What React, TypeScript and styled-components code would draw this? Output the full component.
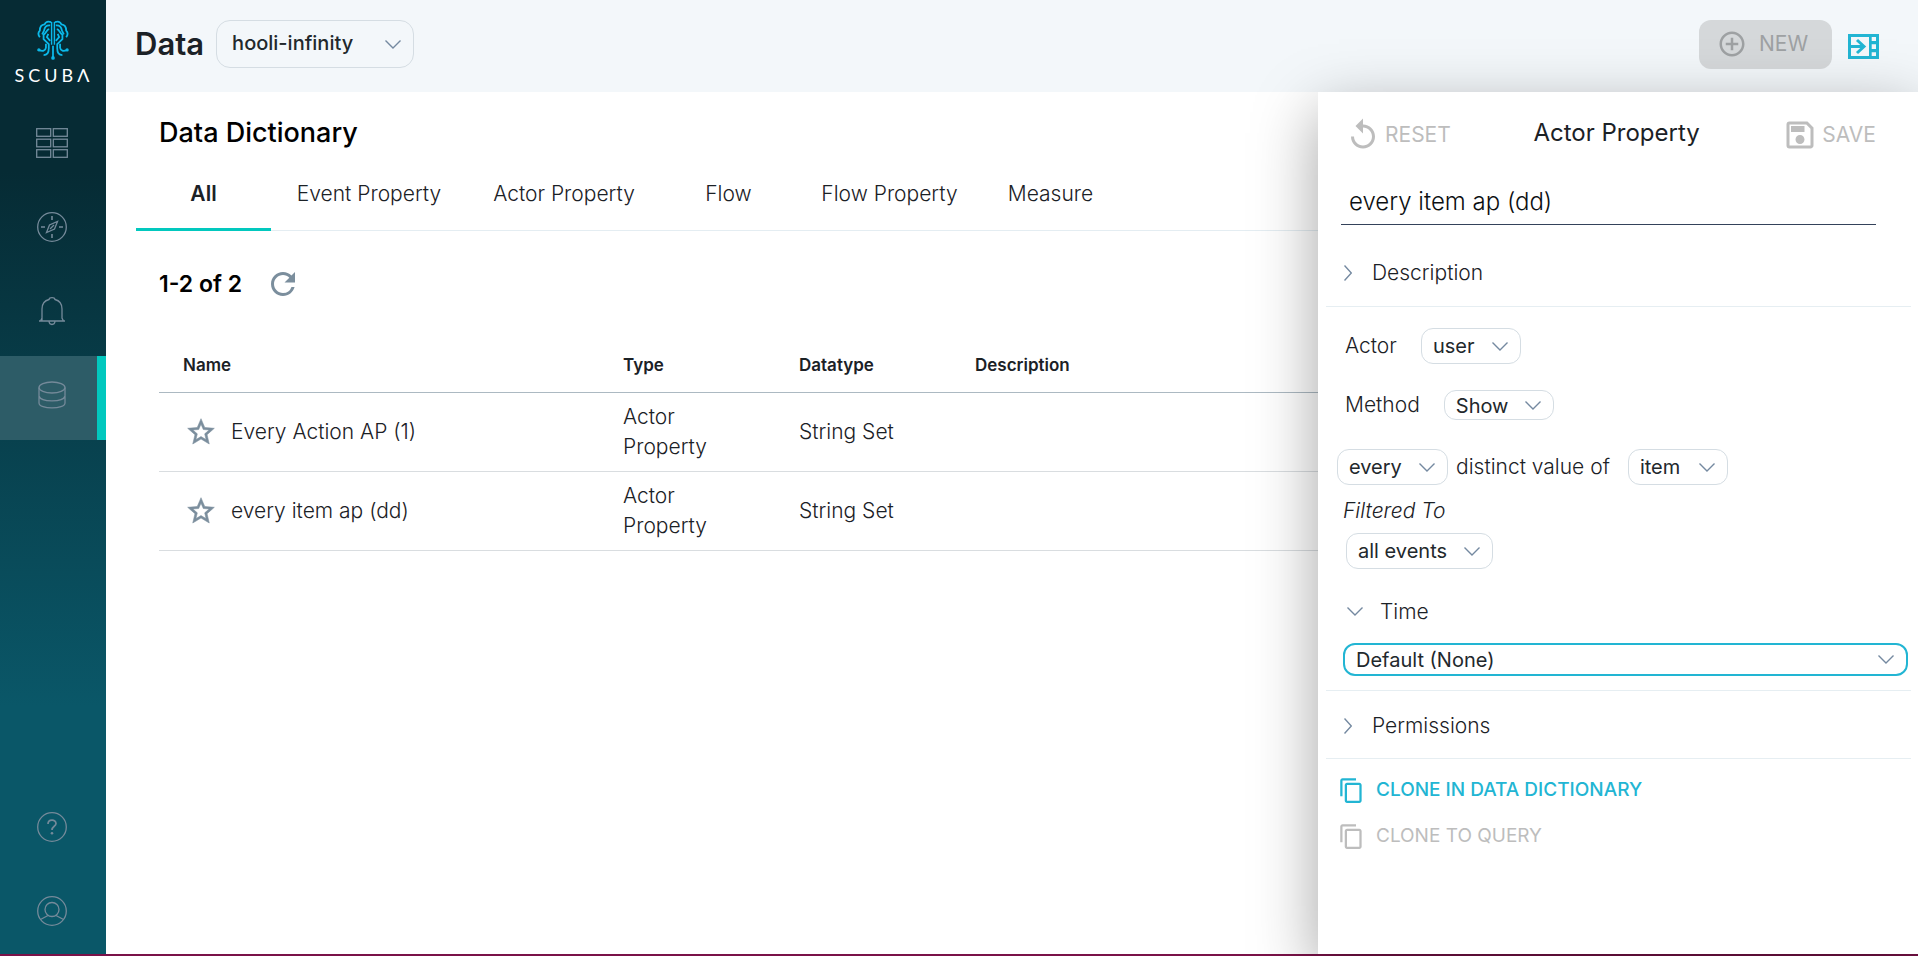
import React, { useState } from "react";
import styled, { createGlobalStyle, css } from "styled-components";
import {
  MdReplay,
  MdOutlineSave,
  MdContentCopy,
  MdRefresh,
  MdStarOutline,
  MdAddCircleOutline,
} from "react-icons/md";

const GlobalStyle = createGlobalStyle`
  *, *::before, *::after { box-sizing: border-box; }
  body {
    margin: 0;
    background: #ffffff;
    color: #1b2126;
    font-family: Inter, "Open Sans", sans-serif;
    font-size: 21px;
    font-weight: 300;
    line-height: 30px;
  }
  button, input, select { font: inherit; color: inherit; }
  h1, h2, p { margin: 0; }
`;

const Shell = styled.div`
  display: flex;
  min-height: 100vh;
  border-bottom: 2px solid #7a1248;
`;

const Sidebar = styled.nav`
  display: flex;
  flex-direction: column;
  flex: none;
  width: 106px;
  background: linear-gradient(180deg, #062b34 0%, #062b34 18%, #0a5768 74%, #0a5768 100%);
`;

const Brand = styled.a`
  display: flex;
  flex-direction: column;
  align-items: center;
  height: 104px;
  padding-top: 19px;
  padding-right: 1px;
  color: #ffffff;
  text-decoration: none;
`;

const Wordmark = styled.span`
  padding-left: 3px;
  font-family: Lato, sans-serif;
  font-size: 18px;
  font-weight: 400;
  line-height: 28px;
  letter-spacing: 4px;
`;

const NavSpacer = styled.div`
  flex: 1;
`;

const NavItem = styled.a<{ $active?: boolean; $footer?: boolean }>`
  display: flex;
  align-items: center;
  justify-content: center;
  height: 84px;
  padding: 0 2px ${(p) => (p.$footer ? 3 : 6)}px 0;
  color: #758a9a;
  ${(p) =>
    p.$active &&
    css`
      padding-right: 0;
      padding-left: 7px;
      border-right: 9px solid #02c8be;
      background: #2d5c67;
    `}
`;

const Main = styled.div`
  display: flex;
  flex-direction: column;
  flex: 1;
  min-width: 0;
`;

const TopBar = styled.header`
  display: flex;
  align-items: flex-start;
  height: 92px;
  padding: 20px 39px 0 29px;
  background: #f3f7fa;
`;

const PageTitle = styled.h1`
  margin-right: 12px;
  font-size: 31px;
  font-weight: 600;
  line-height: 48px;
`;

const SelectFrame = styled.span<{ $size?: "large" | "short" | "wide" }>`
  position: relative;
  display: inline-flex;
  align-items: center;
  height: 36px;
  border: 1px solid #d5dde3;
  border-radius: 12px;
  color: #22282c;
  ${(p) =>
    p.$size === "large" &&
    css`
      width: 198px;
      height: 48px;
      border-radius: 14px;
    `}
  ${(p) =>
    p.$size === "short" &&
    css`
      height: 30px;
    `}
  ${(p) =>
    p.$size === "wide" &&
    css`
      align-self: stretch;
      height: 33px;
      margin-left: 6px;
      border: 2px solid #22b5d3;
    `}
  svg {
    position: absolute;
    right: 12px;
    pointer-events: none;
  }
`;

const NativeSelect = styled.select<{ $roomy?: boolean }>`
  flex: 1;
  align-self: stretch;
  min-width: 0;
  appearance: none;
  padding: 0 0 ${(p) => (p.$roomy ? "2px 15px" : "0 11px")};
  border: 0;
  outline: 0;
  background: transparent;
  font-size: 20px;
  font-weight: ${(p) => (p.$roomy ? 500 : 400)};
`;

const TopActions = styled.div`
  display: flex;
  align-items: flex-start;
  gap: 16px;
  margin-left: auto;
`;

const NewButton = styled.button`
  display: flex;
  align-items: center;
  gap: 12px;
  width: 133px;
  height: 49px;
  padding: 0 0 1px 18px;
  border: 0;
  border-radius: 12px;
  background: #d5d8da;
  color: #9ea1a3;
  font-weight: 400;
`;

const CollapseButton = styled.button`
  display: flex;
  margin-top: 14px;
  padding: 0;
  border: 0;
  background: none;
  color: #22b5d3;
`;

const Body = styled.div`
  display: flex;
  flex: 1;
`;

const Content = styled.main`
  flex: 1;
  min-width: 0;
  padding-top: 23px;
`;

const SectionTitle = styled.h2`
  padding-left: 53px;
  color: #000000;
  font-size: 27px;
  font-weight: 500;
  line-height: 36px;
`;

const TabList = styled.div`
  display: flex;
  height: 80px;
  margin-left: 30px;
  border-bottom: 1px solid #e4edf2;
`;

const Tab = styled.button<{ $selected: boolean; $width: number }>`
  flex: none;
  width: ${(p) => p.$width}px;
  margin-bottom: -1px;
  padding: 8px 0 0;
  border: 0;
  border-bottom: 3px solid ${(p) => (p.$selected ? "#02c8be" : "transparent")};
  background: none;
  font-weight: ${(p) => (p.$selected ? 600 : 300)};
`;

const CountRow = styled.div`
  display: flex;
  align-items: center;
  gap: 23px;
  height: 36px;
  margin: 35px 0 0 53px;
  color: #000000;
  font-size: 23px;
  font-weight: 600;
`;

const IconButton = styled.button`
  display: flex;
  padding: 0;
  border: 0;
  background: none;
  color: #7b8e9d;
`;

const Table = styled.table`
  width: calc(100% - 53px);
  margin: 35px 0 0 53px;
  border-collapse: collapse;
  table-layout: fixed;
`;

const HeadCell = styled.th<{ $width?: number }>`
  width: ${(p) => (p.$width ? `${p.$width}px` : "auto")};
  height: 55px;
  padding: 2px 0 0 24px;
  border-bottom: 1px solid #acb9c2;
  font-size: 17px;
  font-weight: 600;
  text-align: left;
`;

const Cell = styled.td`
  height: 79px;
  padding: 0 24px;
  border-bottom: 1px solid #d9dde0;
`;

const NameCell = styled.div`
  display: flex;
  align-items: center;
  gap: 14px;
  margin-left: 2px;
`;

const Panel = styled.aside`
  position: relative;
  flex: none;
  width: 600px;
  padding: 0 7px 0 8px;
  background: #ffffff;
  box-shadow: 0 20px 60px rgba(0, 0, 0, 0.36);
`;

const PanelHeader = styled.div`
  display: flex;
  align-items: center;
  justify-content: space-between;
  height: 82px;
  padding: 0 35px 0 19px;
`;

const PanelTitle = styled.h2`
  font-size: 24px;
  font-weight: 400;
`;

const HeaderButton = styled.button`
  display: flex;
  align-items: center;
  gap: 4px;
  padding: 4px 0 0;
  border: 0;
  background: none;
  color: #bdbdbd;
  font-weight: 400;
`;

const CloneButton = styled.button`
  display: flex;
  align-items: center;
  gap: 11px;
  padding: 0;
  border: 0;
  background: none;
  color: #22b5d3;
  font-size: 19px;
  font-weight: 500;
  &:disabled {
    color: #bdbdbd;
    font-weight: 400;
  }
`;

const NameInput = styled.input`
  display: block;
  width: calc(100% - 50px);
  height: 51px;
  margin-left: 15px;
  padding: 4px 8px 0;
  border: 0;
  border-bottom: 1px solid #34425a;
  outline: 0;
  background: none;
  color: #0c0f12;
  font-size: 24px;
`;

const Section = styled.section`
  border-bottom: 1px solid #e6eef2;
`;

const Disclosure = styled.button<{ $tall?: boolean }>`
  display: flex;
  align-items: center;
  gap: 20px;
  height: ${(p) => (p.$tall ? 81 : 67)}px;
  padding: ${(p) => (p.$tall ? "14px" : "2px")} 0 0 18px;
  border: 0;
  background: none;
`;

const TimeDisclosure = styled(Disclosure)`
  gap: 17px;
  height: 74px;
  padding: 11px 0 0 10px;
`;

const Form = styled.div`
  display: flex;
  flex-direction: column;
  align-items: flex-start;
  padding: 21px 3px 14px 11px;
`;

const FieldRow = styled.div`
  display: flex;
  align-items: center;
  gap: 24px;
  margin-bottom: 26px;
`;

const ClauseRow = styled.div`
  display: flex;
  align-items: center;
  gap: 8px;
  margin: 3px 0 11px;
`;

const FieldLabel = styled.label`
  padding-left: 8px;
`;

const ClauseLabel = styled.label`
  padding-right: 10px;
`;

const FilterLabel = styled.label`
  padding: 0 0 7px 6px;
  font-style: italic;
`;

const FilterRow = styled.div`
  display: flex;
  padding-left: 9px;
`;

const Actions = styled.div`
  display: flex;
  flex-direction: column;
  align-items: flex-start;
  gap: 16px;
  padding: 16px 0 0 12px;
`;

type Direction = "down" | "right";

function Chevron({ direction = "down" }: { direction?: Direction }) {
  const down = direction === "down";
  return (
    <svg width={down ? 16 : 8} height={down ? 9 : 16} fill="none" stroke="#7489a0" strokeWidth="1.4">
      <path d={down ? "M.5 .5L8 8L15.5 .5" : "M.5 .5L7.3 8L.5 15.5"} />
    </svg>
  );
}

function Dropdown({
  id,
  label,
  value,
  width,
  size,
}: {
  id: string;
  label?: string;
  value: string;
  width?: number;
  size?: "large" | "short" | "wide";
}) {
  return (
    <SelectFrame $size={size} style={width ? { width } : undefined}>
      <NativeSelect id={id} aria-label={label} $roomy={size === "large"} defaultValue={value}>
        <option>{value}</option>
      </NativeSelect>
      <Chevron />
    </SelectFrame>
  );
}

function Logo() {
  return (
    <svg width="32" height="42" viewBox="0 0 34 42" fill="none" stroke="#0bb9ea" strokeWidth="1.9">
      <path d="M15.500 2v24M18.500 2v24" strokeWidth="1.500" />
      <path d="M15 2C11 .500 9 2 8 4.500C4 5 3 8 3 11C1 13 1.500 16 3 18" />
      <path d="M19 2C23 .500 25 2 26 4.500C30 5 31 8 31 11C33 13 32.500 16 31 18" />
      <path d="M14 5.500C10 5 8 8 7.500 11L5.500 15M20 5.500C24 5 26 8 26.500 11L28.500 15" />
      <path d="M13 9.500C10 10 10.500 13 7 15.500V20L12.500 25.500V30C12.500 34.500 11 37 7 37" />
      <path d="M21 9.500C24 10 23.500 13 27 15.500V20L21.500 25.500V30C21.500 34.500 23 37 27 37" />
      <path d="M12 14.500L10.500 18L14 22M22 14.500L23.500 18L20 22" />
      <path d="M9.500 25V29C9 32.500 6 33.500 2 31.500M24.500 25V29C25 32.500 28 33.500 32 31.500M17 27V40" />
      <circle cx="17" cy="40" r="1" />
      <circle cx="2" cy="31.500" r=".8" />
      <circle cx="32" cy="31.500" r=".8" />
    </svg>
  );
}

function GridIcon() {
  return (
    <svg width="32" height="30" fill="none" stroke="currentColor" strokeWidth="1.300">
      {[0, 10.5, 21].map((y) => (
        <g key={y}>
          <rect x=".7" y={y + 0.7} width="14" height="7.600" />
          <rect x="17.300" y={y + 0.7} width="14" height="7.600" />
        </g>
      ))}
    </svg>
  );
}

function CompassIcon() {
  return (
    <svg width="30" height="30" viewBox="0 0 30 30" fill="none" stroke="currentColor" strokeWidth="1.300">
      <circle cx="15" cy="15" r="14.300" />
      <path d="M15 4v4M15 22v4M4 15h4M22 15h4" strokeWidth="1.600" />
      <path d="M20.500 9.500L17.500 17L9.500 20.500L12.500 13Z" />
      <path d="M17 13L13 17" />
    </svg>
  );
}

function BellIcon() {
  return (
    <svg width="28" height="30" viewBox="0 0 28 30" fill="none" stroke="currentColor" strokeWidth="1.300">
      <path d="M1 25H27M4 25V13C4 8 7 4.500 11 3.500C11.500 1 16.500 1 17 3.500C21 4.500 24 8 24 13V22L25.500 25M4 22L2.500 25M11 25.500C11.500 29.500 16.500 29.500 17 25.500" />
    </svg>
  );
}

function DatabaseIcon() {
  return (
    <svg width="28" height="28" viewBox="0 0 28 28" fill="none" stroke="currentColor" strokeWidth="1.300">
      <ellipse cx="14" cy="6.500" rx="13" ry="5.500" />
      <path d="M1 6.500V22C1 28.500 27 28.500 27 22V6.500M1 15C3 21.500 25 21.500 27 15" />
    </svg>
  );
}

function HelpIcon() {
  return (
    <svg width="30" height="30" viewBox="0 0 30 30" fill="none" stroke="currentColor" strokeWidth="1.300">
      <circle cx="15" cy="15" r="14.300" />
      <path d="M11 12C11 7 19 7 19 11.500C19 14.500 15 14 15 18" strokeWidth="1.700" />
      <circle cx="15" cy="21.300" r="1.300" fill="currentColor" stroke="none" />
    </svg>
  );
}

function UserIcon() {
  return (
    <svg width="30" height="30" viewBox="0 0 30 30" fill="none" stroke="currentColor" strokeWidth="1.300">
      <circle cx="15" cy="15" r="14.300" />
      <circle cx="15" cy="13.500" r="7" />
      <path d="M3.500 23.500L11 19.500M19 19.500L26.500 23.500" />
    </svg>
  );
}

function CollapseIcon() {
  return (
    <svg width="31" height="25" viewBox="0 0 31 25">
      <path
        fill="currentColor"
        fillRule="evenodd"
        d="M0 0H31V25H0ZM3 3V22H21V3ZM23.700 3V7H28V3ZM23.700 10.300V15H28V10.300ZM23.700 18.300V22H28V18.300Z"
      />
      <path d="M2 12.500H16M9 6L16 12.500L9 19" fill="none" stroke="currentColor" strokeWidth="3" />
    </svg>
  );
}

const tabs = [
  { name: "All", width: 135 },
  { name: "Event Property", width: 196 },
  { name: "Actor Property", width: 194 },
  { name: "Flow", width: 135 },
  { name: "Flow Property", width: 187 },
  { name: "Measure", width: 135 },
];

const rows = [
  { name: "Every Action AP (1)", type: "Actor Property", datatype: "String Set" },
  { name: "every item ap (dd)", type: "Actor Property", datatype: "String Set" },
];

export default function App() {
  const [tab, setTab] = useState("All");
  return (
    <>
      <GlobalStyle />
      <Shell>
        <Sidebar aria-label="Main">
          <Brand href="#">
            <Logo />
            <Wordmark>SCUBΛ</Wordmark>
          </Brand>
          <NavItem href="#" aria-label="Dashboards"><GridIcon /></NavItem>
          <NavItem href="#" aria-label="Explore"><CompassIcon /></NavItem>
          <NavItem href="#" aria-label="Alerts"><BellIcon /></NavItem>
          <NavItem href="#" aria-label="Data" $active><DatabaseIcon /></NavItem>
          <NavSpacer />
          <NavItem href="#" aria-label="Help" $footer><HelpIcon /></NavItem>
          <NavItem href="#" aria-label="Account" $footer><UserIcon /></NavItem>
        </Sidebar>
        <Main>
          <TopBar>
            <PageTitle>Data</PageTitle>
            <Dropdown id="dataset" label="Dataset" value="hooli-infinity" size="large" />
            <TopActions>
              <NewButton disabled>
                <MdAddCircleOutline size={30} />
                NEW
              </NewButton>
              <CollapseButton aria-label="Collapse panel"><CollapseIcon /></CollapseButton>
            </TopActions>
          </TopBar>
          <Body>
            <Content>
              <SectionTitle>Data Dictionary</SectionTitle>
              <TabList role="tablist">
                {tabs.map((t) => (
                  <Tab
                    key={t.name}
                    role="tab"
                    aria-selected={tab === t.name}
                    $selected={tab === t.name}
                    $width={t.width}
                    onClick={() => setTab(t.name)}
                  >
                    {t.name}
                  </Tab>
                ))}
              </TabList>
              <CountRow>
                1-2 of 2
                <IconButton aria-label="Refresh"><MdRefresh size={36} /></IconButton>
              </CountRow>
              <Table>
                <thead>
                  <tr>
                    <HeadCell $width={440}>Name</HeadCell>
                    <HeadCell $width={176}>Type</HeadCell>
                    <HeadCell $width={176}>Datatype</HeadCell>
                    <HeadCell>Description</HeadCell>
                  </tr>
                </thead>
                <tbody>
                  {rows.map((r) => (
                    <tr key={r.name}>
                      <Cell>
                        <NameCell>
                          <IconButton aria-label={`Favorite ${r.name}`}>
                            <MdStarOutline size={32} strokeWidth={0.4} />
                          </IconButton>
                          {r.name}
                        </NameCell>
                      </Cell>
                      <Cell>{r.type}</Cell>
                      <Cell>{r.datatype}</Cell>
                      <Cell />
                    </tr>
                  ))}
                </tbody>
              </Table>
            </Content>
            <Panel aria-label="Actor Property">
              <PanelHeader>
                <HeaderButton disabled><MdReplay size={36} />RESET</HeaderButton>
                <PanelTitle>Actor Property</PanelTitle>
                <HeaderButton disabled><MdOutlineSave size={36} />SAVE</HeaderButton>
              </PanelHeader>
              <NameInput aria-label="Name" defaultValue="every item ap (dd)" />
              <Section>
                <Disclosure $tall aria-expanded={false}><Chevron direction="right" />Description</Disclosure>
              </Section>
              <Section>
                <Form>
                  <FieldRow>
                    <FieldLabel htmlFor="actor">Actor</FieldLabel>
                    <Dropdown id="actor" value="user" width={100} />
                  </FieldRow>
                  <FieldRow>
                    <FieldLabel htmlFor="method">Method</FieldLabel>
                    <Dropdown id="method" value="Show" size="short" width={110} />
                  </FieldRow>
                  <ClauseRow>
                    <Dropdown id="aggregate" label="Aggregate" value="every" width={111} />
                    <ClauseLabel htmlFor="property">distinct value of</ClauseLabel>
                    <Dropdown id="property" value="item" width={100} />
                  </ClauseRow>
                  <FilterLabel htmlFor="filter">Filtered To</FilterLabel>
                  <FilterRow>
                    <Dropdown id="filter" value="all events" width={147} />
                  </FilterRow>
                  <TimeDisclosure aria-expanded><Chevron />Time</TimeDisclosure>
                  <Dropdown id="time" label="Time" value="Default (None)" size="wide" />
                </Form>
              </Section>
              <Section>
                <Disclosure aria-expanded={false}><Chevron direction="right" />Permissions</Disclosure>
              </Section>
              <Actions>
                <CloneButton><MdContentCopy size={27} />CLONE IN DATA DICTIONARY</CloneButton>
                <CloneButton disabled><MdContentCopy size={27} />CLONE TO QUERY</CloneButton>
              </Actions>
            </Panel>
          </Body>
        </Main>
      </Shell>
    </>
  );
}
